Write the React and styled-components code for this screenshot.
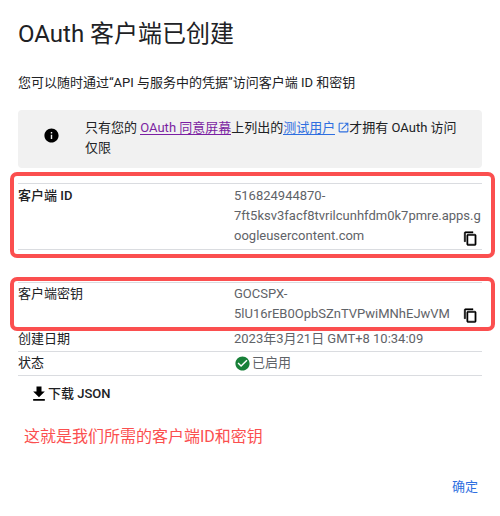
import React from 'react';
import styled, { createGlobalStyle } from 'styled-components';

const Global = createGlobalStyle`
  html, body { margin: 0; padding: 0; background: #fff; }
  body { font-family: Roboto, "Noto Sans CJK SC", sans-serif; color: #202124; }
`;

const Dialog = styled.div`
  width: 500px;
  height: 516px;
  box-sizing: border-box;
  padding: 18px 18px 0;
  overflow: hidden;
`;

const Title = styled.h1`
  margin: 0;
  font-size: 24px;
  line-height: 32px;
  font-weight: 400;
`;

const Sub = styled.p`
  margin: 23px 0 17px;
  font-size: 13px;
  line-height: 20px;
`;

const Notice = styled.div`
  display: flex;
  align-items: flex-start;
  height: 58px;
  box-sizing: border-box;
  padding: 8px 16px 8px 0;
  background: #f1f1f1;
  border-radius: 4px;
  font-size: 13px;
  line-height: 20px;
`;

const NoticeIcon = styled.div`
  flex: 0 0 67px;
  display: flex;
  justify-content: center;
  padding-top: 9px;
  svg { display: block; }
`;

const Link = styled.a`
  color: ${p => p.$visited ? '#7b1fa2' : '#2f6fe0'};
  box-shadow: inset 0 -1px 0 currentColor;
  text-decoration: none;
`;

const External = styled.svg`
  width: 13px;
  height: 13px;
  margin: 0 -1px 0 2px;
  vertical-align: -2px;
  fill: #2f6fe0;
`;

const Table = styled.div`
  margin-top: 15px;
`;

const Row = styled.div`
  position: relative;
  display: grid;
  grid-template-columns: 216px 1fr;
  padding: ${p => p.$pad};
  margin-bottom: ${p => p.$after || 0}px;
  border-top: ${p => p.$top ? '1px solid #dadce0' : 'none'};
  border-bottom: 1px solid #dadce0;
  font-size: 13px;
  line-height: 20px;
`;

const Label = styled.div`
  font-weight: ${p => p.$strong ? 500 : 400};
`;

const Value = styled.div`
  position: relative;
  color: #5f6368;
`;

const CopyIcon = styled.svg`
  position: absolute;
  right: 4px;
  bottom: ${p => p.$bottom}px;
  width: 15px;
  height: 15px;
  fill: #000;
  stroke: #000;
  stroke-width: 0.8;
`;

const Mark = styled.div`
  position: absolute;
  left: -8px;
  right: -13px;
  top: ${p => p.$top}px;
  bottom: ${p => p.$bottom}px;
  border: 4px solid #fb4f4f;
  border-radius: 7px;
  pointer-events: none;
`;

const Status = styled.div`
  display: flex;
  align-items: center;
  height: 20px;
  svg { width: 17px; height: 17px; fill: #188038; margin-right: 1px; }
`;

const Download = styled.button`
  display: flex;
  align-items: center;
  margin: 8px 0 0 11px;
  padding: 0;
  border: none;
  background: none;
  font: 500 13px/20px Roboto, "Noto Sans CJK SC", sans-serif;
  color: #202124;
  svg { width: 20px; height: 20px; fill: #000; margin-right: -1px; }
`;

const Note = styled.p`
  margin: 21px 0 0 6px;
  font-size: 16px;
  line-height: 24px;
  color: #fb4f4f;
`;

const Footer = styled.div`
  display: flex;
  justify-content: flex-end;
  margin-top: 28px;
  padding-right: 4px;
`;

const Confirm = styled.button`
  padding: 0;
  border: none;
  background: none;
  font: 400 13px/20px Roboto, "Noto Sans CJK SC", sans-serif;
  color: #2f6fe0;
`;

const Copy = ({ bottom }) => (
  <CopyIcon $bottom={bottom} viewBox="0 0 24 24">
    <path d="M16 1H4c-1.1 0-2 .9-2 2v14h2V3h12V1zm3 4H8c-1.1 0-2 .9-2 2v14c0 1.1.9 2 2 2h11c1.1 0 2-.9 2-2V7c0-1.1-.9-2-2-2zm0 16H8V7h11v14z" />
  </CopyIcon>
);

export default function App() {
  return (
    <Dialog>
      <Global />
      <Title>OAuth 客户端已创建</Title>
      <Sub>您可以随时通过“API 与服务中的凭据”访问客户端 ID 和密钥</Sub>
      <Notice>
        <NoticeIcon>
          <svg width="17" height="17" viewBox="0 0 24 24">
            <path d="M12 2C6.48 2 2 6.48 2 12s4.48 10 10 10 10-4.48 10-10S17.52 2 12 2zm1 15h-2v-6h2v6zm0-8h-2V7h2v2z" />
          </svg>
        </NoticeIcon>
        <div>
          只有您的 <Link $visited>OAuth 同意屏幕</Link>上列出的<Link>测试用户</Link>
          <External viewBox="0 0 24 24">
            <path d="M19 19H5V5h7V3H5c-1.11 0-2 .9-2 2v14c0 1.1.89 2 2 2h14c1.1 0 2-.9 2-2v-7h-2v7zM14 3v2h3.59l-9.83 9.83 1.41 1.41L19 6.41V10h2V3h-7z" />
          </External>
          才拥有 OAuth 访问仅限
        </div>
      </Notice>

      <Table>
        <Row $top $after={32} $pad="2px 0 3px">
          <Label $strong>客户端 ID</Label>
          <Value>
            516824944870-<br />
            7ft5ksv3facf8tvrilcunhfdm0k7pmre.apps.g<br />
            oogleusercontent.com
            <Copy bottom={0} />
          </Value>
          <Mark $top={-12} $bottom={-9} />
        </Row>
        <Row $top $pad="1px 0 4px">
          <Label>客户端密钥</Label>
          <Value>
            GOCSPX-<br />
            5lU16rEB0OpbSZnTVPwiMNhEJwVM
            <Copy bottom={1} />
          </Value>
          <Mark $top={-6} $bottom={-3} />
        </Row>
        <Row $pad="0 0 2px">
          <Label>创建日期</Label>
          <Value>2023年3月21日 GMT+8 10:34:09</Value>
        </Row>
        <Row $pad="1px 0 2px">
          <Label>状态</Label>
          <Value>
            <Status>
              <svg viewBox="0 0 24 24">
                <path d="M12 2C6.48 2 2 6.48 2 12s4.48 10 10 10 10-4.48 10-10S17.52 2 12 2zm-2 15l-5-5 1.41-1.41L10 14.17l7.59-7.59L19 8l-9 9z" />
              </svg>
              已启用
            </Status>
          </Value>
        </Row>
      </Table>

      <Download>
        <svg viewBox="0 0 24 24">
          <path d="M19 9h-4V3H9v6H5l7 7 7-7zM5 18v2h14v-2H5z" />
        </svg>
        下载 JSON
      </Download>
      <Note>这就是我们所需的客户端ID和密钥</Note>
      <Footer>
        <Confirm>确定</Confirm>
      </Footer>
    </Dialog>
  );
}
